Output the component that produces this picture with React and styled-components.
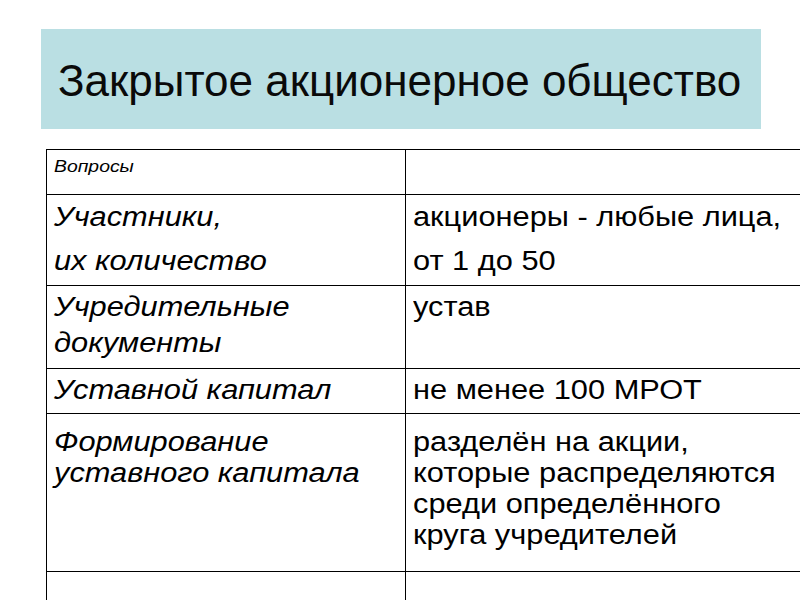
import React from "react";
import styled, { createGlobalStyle } from "styled-components";

const rows = [
  { q: ["Вопросы"], a: [], small: true, h: 45, pad: 7, lh: 20 },
  { q: ["Участники,", "их количество"], a: ["акционеры - любые лица,", "от 1 до 50"], h: 91, pad: 0, lh: 44 },
  { q: ["Учредительные", "документы"], a: ["устав"], h: 83, pad: 3, lh: 36 },
  { q: ["Уставной капитал"], a: ["не менее 100 МРОТ"], h: 45, pad: 3, lh: 36 },
  {
    q: ["Формирование", "уставного капитала"],
    a: ["разделён на акции,", "которые распределяются", "среди определённого", "круга учредителей"],
    h: 158,
    pad: 13,
    lh: 31,
  },
  { q: [], a: [], h: 40, pad: 0, lh: 31 },
];

function App() {
  return (
    <>
      <GlobalStyle />
      <Slide>
        <TitleBand>
          <Title>Закрытое акционерное общество</Title>
        </TitleBand>
        <Table>
          <tbody>
            {rows.map((r, i) => (
              <Row key={i} $h={r.h}>
                <QuestionCell $pad={r.pad} $lh={r.lh} $small={r.small}>
                  {r.q.map((t, j) => (
                    <Line key={j}>{t}</Line>
                  ))}
                </QuestionCell>
                <AnswerCell $pad={r.pad} $lh={r.lh}>
                  {r.a.map((t, j) => (
                    <Line key={j}>{t}</Line>
                  ))}
                </AnswerCell>
              </Row>
            ))}
          </tbody>
        </Table>
      </Slide>
    </>
  );
}

export default App;

const GlobalStyle = createGlobalStyle`
  html, body {
    margin: 0;
    padding: 0;
    background: #fff;
    overflow: hidden;
  }
  body {
    font-family: "Liberation Sans", Arial, sans-serif;
    color: #000;
  }
`;

const Slide = styled.div`
  width: 800px;
  height: 600px;
  overflow: hidden;
  padding-top: 29px;
  box-sizing: border-box;
`;

const TitleBand = styled.div`
  margin-left: 41px;
  width: 720px;
  height: 100px;
  background: #badfe3;
  display: flex;
  align-items: center;
  padding: 4px 0 0 17px;
  box-sizing: border-box;
`;

const Title = styled.h1`
  margin: 0;
  font-size: 44px;
  font-weight: normal;
  color: #0a0a0a;
  white-space: nowrap;
`;

const Table = styled.table`
  margin: 20px 0 0 46px;
  width: 780px;
  border-collapse: collapse;
  table-layout: fixed;
`;

const Row = styled.tr`
  height: ${(p) => p.$h}px;
`;

const Cell = styled.td`
  border: 1.5px solid #000;
  vertical-align: top;
  padding: ${(p) => p.$pad}px 8px 0 7px;
  font-size: 27px;
  line-height: ${(p) => p.$lh}px;
  box-sizing: border-box;
  overflow: hidden;
`;

const QuestionCell = styled(Cell)`
  width: 359px;
  font-style: italic;
  font-size: ${(p) => (p.$small ? 17 : 27)}px;
`;

const AnswerCell = styled(Cell)``;

/* the slide text is rendered a little wider than plain Arial */
const Line = styled.div`
  white-space: nowrap;
  transform: scaleX(1.14);
  transform-origin: left center;
`;
